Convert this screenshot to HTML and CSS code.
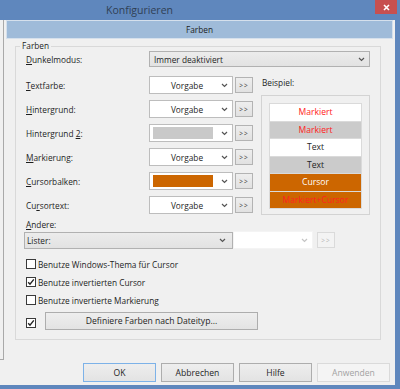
FILE: index.html
```html
<!DOCTYPE html>
<html lang="de">
<head>
  <meta charset="UTF-8">
  <title>Konfigurieren</title>
  <link rel="stylesheet" href="styles.css">
</head>
<body>
  <div class="window">
    <div class="titlebar">
      <span class="title">Konfigurieren</span>
      <span class="close">
        <svg width="7" height="7" viewBox="0 0 7 7"><path d="M1 1l5 5M6 1l-5 5" stroke="#fff" stroke-width="1.6"/></svg>
      </span>
    </div>

    <div class="client">
      <div class="content">
        <div class="tree-edge"></div>

        <div class="page">
          <div class="page-header">Farben</div>

          <fieldset class="group">
            <legend>Farben</legend>

            <div class="mode-row">
              <span class="label"><u>D</u>unkelmodus:</span>
              <div class="select mode-select">
                <span>Immer deaktiviert</span>
                <svg class="arrow" width="7" height="5" viewBox="0 0 7 5"><path d="M1 1l2.5 2.5L6 1" fill="none" stroke="#555" stroke-width="1.2"/></svg>
              </div>
            </div>

            <div class="colors">
              <div class="color-rows">
                <div class="color-row">
                  <span class="label"><u>T</u>extfarbe:</span>
                  <div class="combo"><span class="value">Vorgabe</span><svg class="arrow" width="7" height="5" viewBox="0 0 7 5"><path d="M1 1l2.5 2.5L6 1" fill="none" stroke="#555" stroke-width="1.2"/></svg></div>
                  <button class="more">&gt;&gt;</button>
                </div>
                <div class="color-row">
                  <span class="label"><u>H</u>intergrund:</span>
                  <div class="combo"><span class="value">Vorgabe</span><svg class="arrow" width="7" height="5" viewBox="0 0 7 5"><path d="M1 1l2.5 2.5L6 1" fill="none" stroke="#555" stroke-width="1.2"/></svg></div>
                  <button class="more">&gt;&gt;</button>
                </div>
                <div class="color-row">
                  <span class="label">Hintergrund <u>2</u>:</span>
                  <div class="combo"><span class="swatch swatch-gray"></span><svg class="arrow" width="7" height="5" viewBox="0 0 7 5"><path d="M1 1l2.5 2.5L6 1" fill="none" stroke="#555" stroke-width="1.2"/></svg></div>
                  <button class="more">&gt;&gt;</button>
                </div>
                <div class="color-row">
                  <span class="label"><u>M</u>arkierung:</span>
                  <div class="combo"><span class="value">Vorgabe</span><svg class="arrow" width="7" height="5" viewBox="0 0 7 5"><path d="M1 1l2.5 2.5L6 1" fill="none" stroke="#555" stroke-width="1.2"/></svg></div>
                  <button class="more">&gt;&gt;</button>
                </div>
                <div class="color-row">
                  <span class="label"><u>C</u>ursorbalken:</span>
                  <div class="combo"><span class="swatch swatch-orange"></span><svg class="arrow" width="7" height="5" viewBox="0 0 7 5"><path d="M1 1l2.5 2.5L6 1" fill="none" stroke="#555" stroke-width="1.2"/></svg></div>
                  <button class="more">&gt;&gt;</button>
                </div>
                <div class="color-row">
                  <span class="label">Cu<u>r</u>sortext:</span>
                  <div class="combo"><span class="value">Vorgabe</span><svg class="arrow" width="7" height="5" viewBox="0 0 7 5"><path d="M1 1l2.5 2.5L6 1" fill="none" stroke="#555" stroke-width="1.2"/></svg></div>
                  <button class="more">&gt;&gt;</button>
                </div>
              </div>

              <div class="example">
                <div class="example-label">Beispiel:</div>
                <div class="example-box">
                  <div class="example-list">
                    <div class="sample bg-white fg-red">Markiert</div>
                    <div class="sample bg-gray fg-red">Markiert</div>
                    <div class="sample bg-white">Text</div>
                    <div class="sample bg-gray">Text</div>
                    <div class="sample bg-orange fg-white">Cursor</div>
                    <div class="sample bg-orange fg-red">Markiert+Cursor</div>
                  </div>
                </div>
              </div>
            </div>

            <div class="other-label"><u>A</u>ndere:</div>
            <div class="other-row">
              <div class="select other-select">
                <span>Lister:</span>
                <svg class="arrow" width="7" height="5" viewBox="0 0 7 5"><path d="M1 1l2.5 2.5L6 1" fill="none" stroke="#555" stroke-width="1.2"/></svg>
              </div>
              <div class="combo combo-disabled">
                <svg class="arrow" width="7" height="5" viewBox="0 0 7 5"><path d="M1 1l2.5 2.5L6 1" fill="none" stroke="#c4c4c4" stroke-width="1.2"/></svg>
              </div>
              <button class="more more-disabled">&gt;&gt;</button>
            </div>

            <div class="check-row"><span class="checkbox"></span>Benutze Windows-Thema für Cursor</div>
            <div class="check-row"><span class="checkbox checked"><svg width="8" height="8" viewBox="0 0 8 8"><path d="M1.2 4.2l1.8 2L6.8 1.4" fill="none" stroke="#222" stroke-width="1.4"/></svg></span>Benutze invertierten Cursor</div>
            <div class="check-row"><span class="checkbox"></span>Benutze invertierte Markierung</div>
            <div class="check-row type-row">
              <span class="checkbox checked"><svg width="8" height="8" viewBox="0 0 8 8"><path d="M1.2 4.2l1.8 2L6.8 1.4" fill="none" stroke="#222" stroke-width="1.4"/></svg></span>
              <button class="button type-button">Definiere Farben nach Dateityp...</button>
            </div>
          </fieldset>
        </div>
      </div>

      <div class="buttons">
        <button class="button dialog-button default">OK</button>
        <button class="button dialog-button">Abbrechen</button>
        <button class="button dialog-button">Hilfe</button>
        <button class="button dialog-button disabled">Anwenden</button>
      </div>
    </div>
  </div>
</body>
</html>
```

FILE: styles.css
```css
body {
  margin: 0;
  width: 400px;
  height: 389px;
  overflow: hidden;
  background: #5f87bd;
  font-family: 'Open Sans', 'Liberation Sans', sans-serif;
  font-size: 8.3px;
  color: #1e1e1e;
}

.window {
  display: flex;
  flex-direction: column;
  height: 389px;
}

.titlebar {
  height: 20px;
  display: flex;
  align-items: flex-start;
}

.title {
  flex: 1;
  padding-left: 106px;
  font-size: 10.5px;
  line-height: 20px;
  color: #2f3f55;
}

.close {
  width: 22px;
  height: 14px;
  margin-right: 3px;
  background: #c75050;
  display: flex;
  align-items: center;
  justify-content: center;
}

.client {
  width: 395px;
  height: 365px;
  background: #f0f0f0;
  display: flex;
  flex-direction: column;
}

.content {
  display: flex;
  height: 340px;
}

.tree-edge {
  width: 3px;
  height: 339px;
  border-right: 1px solid #a9a9a9;
  border-bottom: 1px solid #a9a9a9;
}

.page {
  margin-left: 2px;
  width: 387px;
}

.page-header {
  height: 17px;
  line-height: 17px;
  text-align: center;
  background: #9fbbd9;
  border: 1px solid #d5e0ec;
}

.group {
  margin: 2px 12px 0 9px;
  padding: 0 9px 9px 10px;
  border: 1px solid #d9d9d9;
  min-width: 0;
}

.group legend {
  margin-left: -6px;
  padding: 0 2px;
  line-height: 10px;
}

.label {
  display: block;
  width: 123px;
  flex-shrink: 0;
}

u {
  text-underline-offset: 1px;
}

.mode-row {
  display: flex;
  align-items: center;
}

.select {
  box-sizing: border-box;
  display: flex;
  align-items: center;
  justify-content: space-between;
  padding: 0 4px 0 4px;
  background: linear-gradient(#ececec, #e2e2e2);
  border: 1px solid #b1b1b1;
}

.mode-select {
  width: 221px;
  height: 16px;
}

.arrow {
  flex-shrink: 0;
}

.colors {
  display: flex;
  gap: 8px;
  margin-top: 9px;
}

.color-rows {
  display: flex;
  flex-direction: column;
  gap: 6px;
}

.color-row {
  display: flex;
  align-items: center;
}

.combo {
  box-sizing: border-box;
  width: 84px;
  height: 18px;
  display: flex;
  align-items: center;
  padding: 0 4px 0 3px;
  background: #fff;
  border: 1px solid #bdbdbd;
}

.combo .value {
  flex: 1;
  text-align: center;
}

.swatch {
  flex: 1;
  height: 12px;
  margin-right: 8px;
}

.swatch-gray {
  background: #c9c9c9;
}

.swatch-orange {
  background: #cc6600;
}

.more {
  box-sizing: border-box;
  width: 18px;
  height: 16px;
  margin-left: 2px;
  padding: 0;
  font-family: inherit;
  font-size: 6.5px;
  letter-spacing: 1px;
  color: #333;
  background: linear-gradient(#eeeeee, #e1e1e1);
  border: 1px solid #b3b3b3;
}

.example {
  width: 109px;
}

.example-label {
  height: 19px;
  line-height: 13px;
  padding-left: 1px;
}

.example-box {
  box-sizing: border-box;
  height: 120px;
  padding: 7px 7px 0 7px;
  border: 1px solid #d3d3d3;
}

.example-list {
  display: flex;
  flex-direction: column;
  gap: 1px;
  background: #dadada;
  border: 1px solid #dadada;
}

.sample {
  height: 16.5px;
  line-height: 16.5px;
  text-align: center;
  font-size: 8.6px;
}

.bg-white {
  background: #fff;
}

.bg-gray {
  background: #cbcbcb;
}

.bg-orange {
  background: #cc6600;
}

.fg-red {
  color: #ff2020;
}

.fg-white {
  color: #fff;
}

.other-label {
  margin-top: 4px;
  line-height: 11px;
}

.other-row {
  display: flex;
  align-items: center;
  margin-top: 1px;
  margin-left: -2px;
}

.other-select {
  width: 209px;
  height: 17px;
  padding-left: 2px;
  padding-right: 6px;
}

.combo-disabled {
  width: 80px;
  justify-content: flex-end;
  border-color: #f4f4f4;
}

.more-disabled {
  margin-left: 4px;
  color: #b5b5b5;
  background: #f3f3f3;
  border-color: #dadada;
}

.check-row {
  display: flex;
  align-items: center;
  height: 12px;
  margin-top: 6px;
}

.check-row:first-of-type {
  margin-top: 0;
}

.other-row + .check-row {
  margin-top: 9px;
}

.checkbox {
  box-sizing: border-box;
  width: 10px;
  height: 10px;
  margin-right: 2px;
  background: #fff;
  border: 1px solid #3a3a3a;
  display: flex;
  align-items: center;
  justify-content: center;
}

.type-row {
  height: 18px;
  margin-top: 6px;
}

.type-row .checkbox {
  margin-top: 3px;
}

.button {
  box-sizing: border-box;
  padding: 0;
  font-family: inherit;
  font-size: 8.6px;
  color: #1e1e1e;
  background: linear-gradient(#eeeeee, #e3e3e3);
  border: 1px solid #adadad;
}

.type-button {
  width: 213px;
  height: 18px;
  margin-left: 7px;
}

.buttons {
  display: flex;
  gap: 5px;
  padding-left: 83px;
  margin-top: 3px;
}

.dialog-button {
  width: 73px;
  height: 19px;
}

.dialog-button.default {
  border-color: #7db2e8;
}

.dialog-button.disabled {
  color: #a2a2a2;
  background: #f4f4f4;
  border-color: #dadada;
}
```
